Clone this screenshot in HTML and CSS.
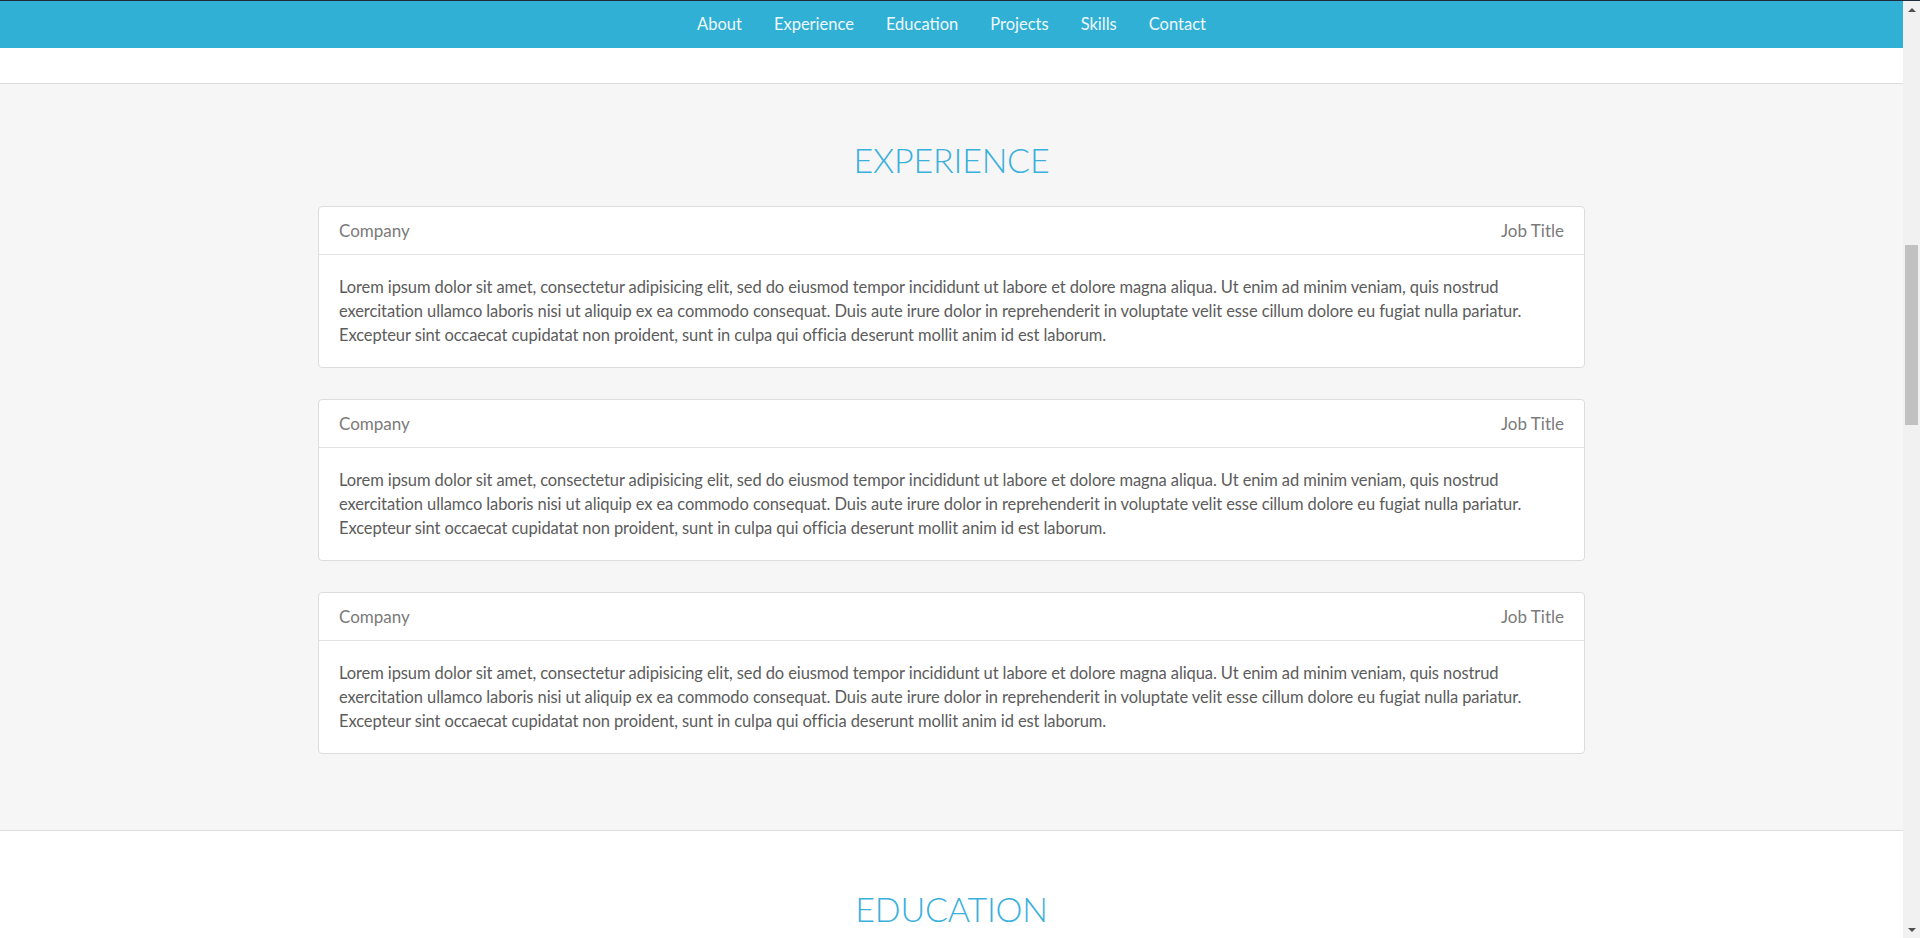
FILE: index.html
```html
<!DOCTYPE html>
<html lang="en">
<head>
<meta charset="utf-8">
<title>Portfolio</title>
<link rel="stylesheet" href="styles.css">
</head>
<body>
<nav class="topnav">
  <ul class="nav-list">
    <li><a href="#about">About</a></li>
    <li><a href="#experience">Experience</a></li>
    <li><a href="#education">Education</a></li>
    <li><a href="#projects">Projects</a></li>
    <li><a href="#skills">Skills</a></li>
    <li><a href="#contact">Contact</a></li>
  </ul>
</nav>

<div class="fake-scrollbar" aria-hidden="true">
  <div class="sb-btn sb-up"><span class="tri tri-up"></span></div>
  <div class="sb-track"><div class="sb-thumb"></div></div>
  <div class="sb-btn sb-down"><span class="tri tri-down"></span></div>
</div>

<main class="page">
  <div id="about" class="about-tail"></div>

  <section id="experience" class="section section-grey">
    <h2 class="section-title">EXPERIENCE</h2>
    <div class="card">
      <div class="card-head"><span>Company</span><span>Job Title</span></div>
      <div class="card-body">Lorem ipsum dolor sit amet, consectetur adipisicing elit, sed do eiusmod tempor incididunt ut labore et dolore magna aliqua. Ut enim ad minim veniam, quis nostrud exercitation ullamco laboris nisi ut aliquip ex ea commodo consequat. Duis aute irure dolor in reprehenderit in voluptate velit esse cillum dolore eu fugiat nulla pariatur. Excepteur sint occaecat cupidatat non proident, sunt in culpa qui officia deserunt mollit anim id est laborum.</div>
    </div>
    <div class="card">
      <div class="card-head"><span>Company</span><span>Job Title</span></div>
      <div class="card-body">Lorem ipsum dolor sit amet, consectetur adipisicing elit, sed do eiusmod tempor incididunt ut labore et dolore magna aliqua. Ut enim ad minim veniam, quis nostrud exercitation ullamco laboris nisi ut aliquip ex ea commodo consequat. Duis aute irure dolor in reprehenderit in voluptate velit esse cillum dolore eu fugiat nulla pariatur. Excepteur sint occaecat cupidatat non proident, sunt in culpa qui officia deserunt mollit anim id est laborum.</div>
    </div>
    <div class="card">
      <div class="card-head"><span>Company</span><span>Job Title</span></div>
      <div class="card-body">Lorem ipsum dolor sit amet, consectetur adipisicing elit, sed do eiusmod tempor incididunt ut labore et dolore magna aliqua. Ut enim ad minim veniam, quis nostrud exercitation ullamco laboris nisi ut aliquip ex ea commodo consequat. Duis aute irure dolor in reprehenderit in voluptate velit esse cillum dolore eu fugiat nulla pariatur. Excepteur sint occaecat cupidatat non proident, sunt in culpa qui officia deserunt mollit anim id est laborum.</div>
    </div>
  </section>

  <section id="education" class="section section-white section-edu">
    <h2 class="section-title">EDUCATION</h2>
  </section>
</main>
</body>
</html>
```

FILE: styles.css
```css
html, body {
  margin: 0;
  padding: 0;
}
body {
  font-family: "Lato", "Liberation Sans", sans-serif;
  background: #ffffff;
  color: #555555;
}

.page {
  padding-right: 17px;
}

.topnav {
  position: fixed;
  top: 0;
  left: 0;
  right: 0;
  z-index: 10;
  background: #31b0d5;
  border-top: 1px solid #1d2b3b;
}
.nav-list {
  list-style: none;
  margin: 0;
  padding: 0 17px 0 0;
  display: flex;
  justify-content: center;
}
.nav-list a {
  display: block;
  padding: 0 16px;
  line-height: 47px;
  font-size: 16.5px;
  color: #eef8fc;
  text-decoration: none;
}

.fake-scrollbar {
  position: fixed;
  top: 1px;
  right: 0;
  bottom: 0;
  width: 17px;
  z-index: 20;
  background: #f1f1f1;
  display: flex;
  flex-direction: column;
}
.sb-btn {
  height: 17px;
  flex: none;
  display: flex;
  align-items: center;
  justify-content: center;
}
.sb-track {
  flex: 1;
  padding-top: 227px;
}
.sb-thumb {
  margin: 0 2px;
  height: 180px;
  background: #c1c1c1;
}
.tri {
  width: 0;
  height: 0;
  border-left: 4px solid transparent;
  border-right: 4px solid transparent;
}
.tri-up {
  border-bottom: 4px solid #505050;
}
.tri-down {
  border-top: 4px solid #505050;
}

.about-tail {
  height: 83px;
  background: #ffffff;
}

.section {
  padding: 57px 0 45px;
  border-top: 1px solid #dddddd;
}
.section-grey {
  background: #f6f6f6;
}
.section-white {
  background: #ffffff;
}
.section-edu {
  padding-top: 59px;
  min-height: 400px;
}

.section-title {
  margin: 0 0 28px;
  text-align: center;
  font-weight: 300;
  font-size: 34px;
  line-height: 1.1;
  color: #3ab0dc;
  letter-spacing: -0.2px;
}

.card {
  width: 1267px;
  margin: 0 auto 31px;
  box-sizing: border-box;
  background: #ffffff;
  border: 1px solid #dddddd;
  border-radius: 4px;
}
.card-head {
  display: flex;
  justify-content: space-between;
  padding: 12px 20px;
  line-height: 23px;
  font-size: 17px;
  color: #7a7a7a;
  border-bottom: 1px solid #e3e3e3;
}
.card-body {
  padding: 20px;
  font-size: 16.5px;
  letter-spacing: -0.1px;
  line-height: 24px;
  color: #5c5c5c;
}
```
